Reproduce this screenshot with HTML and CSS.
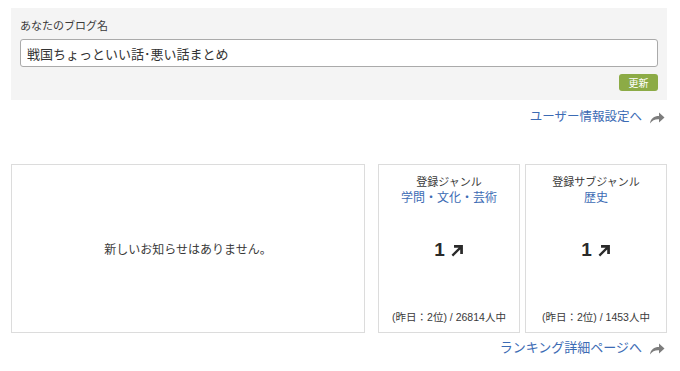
FILE: index.html
```html
<!DOCTYPE html>
<html lang="ja">
<head>
  <meta charset="UTF-8" />
  <title>ブログ設定</title>
  <link rel="stylesheet" href="styles.css">
</head>
<body>

  <div class="blog-name">
    <label for="blog_name">あなたのブログ名</label>
    <input type="text" id="blog_name" name="blog_name" value="戦国ちょっといい話･悪い話まとめ">
    <div class="actions">
      <button type="submit">更新</button>
    </div>
  </div>

  <div class="more-link">
    <a href="#">ユーザー情報設定へ</a>
    <svg class="go" viewBox="0 0 16 13"><path d="M1 12.5C1.6 7.5 5 5 10 5V1.5L15.5 6.5 10 11.5V8.2C6 8 3 9.3 1 12.5Z"/></svg>
  </div>

  <div class="cards">
    <div class="card news">新しいお知らせはありません。</div>

    <div class="card rank">
      <div class="rank-title">登録ジャンル</div>
      <a href="#" class="rank-genre">学問・文化・芸術</a>
      <div class="rank-num">1 <svg class="up" viewBox="0 0 12 12"><path d="M2 11.5L0.5 10 7 3.5H2.8V1H11V9.2H8.5V5Z"/></svg></div>
      <div class="rank-sub">(昨日：2位) / 26814人中</div>
    </div>

    <div class="card rank">
      <div class="rank-title">登録サブジャンル</div>
      <a href="#" class="rank-genre">歴史</a>
      <div class="rank-num">1 <svg class="up" viewBox="0 0 12 12"><path d="M2 11.5L0.5 10 7 3.5H2.8V1H11V9.2H8.5V5Z"/></svg></div>
      <div class="rank-sub">(昨日：2位) / 1453人中</div>
    </div>
  </div>

  <div class="more-link bottom">
    <a href="#">ランキング詳細ページへ</a>
    <svg class="go" viewBox="0 0 16 13"><path d="M1 12.5C1.6 7.5 5 5 10 5V1.5L15.5 6.5 10 11.5V8.2C6 8 3 9.3 1 12.5Z"/></svg>
  </div>

</body>
</html>
```

FILE: styles.css
```css
body {
  font-family: "Liberation Sans", Arial, "Noto Sans CJK JP", sans-serif;
  margin: 0;
  padding: 8px 13px 0 11px;
  background: white;
  color: #3a3a3a;
}

a {
  color: #3c6bb4;
  text-decoration: none;
}

.blog-name {
  background: #f4f4f4;
  padding: 11px 9px 9px 9px;
}

.blog-name label {
  display: block;
  font-size: 11px;
  line-height: 14px;
  margin-bottom: 6px;
}

.blog-name input[type="text"] {
  display: block;
  box-sizing: border-box;
  width: 100%;
  height: 28px;
  padding: 0 6px;
  border: 1px solid #aaa;
  border-radius: 3px;
  font-family: inherit;
  font-size: 13px;
  color: #333;
  background: white;
}

.actions {
  display: flex;
  justify-content: flex-end;
  margin-top: 7px;
}

button {
  width: 39px;
  height: 17px;
  padding: 0;
  background: #8cab46;
  color: white;
  font-family: inherit;
  font-size: 10px;
  border: none;
  border-radius: 3px;
  cursor: pointer;
}

.more-link {
  display: flex;
  justify-content: flex-end;
  align-items: center;
  gap: 7px;
  margin-top: 8px;
  padding-right: 2px;
  font-size: 12.5px;
  line-height: 18px;
}

.go {
  width: 16px;
  height: 13px;
  fill: #7d7d7d;
}

.cards {
  display: flex;
  margin-top: 38px;
  height: 169px;
}

.card {
  box-sizing: border-box;
  border: 1px solid #dcdcdc;
  background: white;
}

.news {
  width: 354px;
  margin-right: 13px;
  display: flex;
  align-items: center;
  justify-content: center;
  font-size: 12px;
}

.rank {
  width: 142px;
  margin-right: 5px;
  display: flex;
  flex-direction: column;
  align-items: center;
  padding-top: 10px;
}

.rank:last-child {
  margin-right: 0;
}

.rank-title {
  font-size: 11px;
  line-height: 15px;
}

.rank-genre {
  font-size: 12px;
  line-height: 16px;
}

.rank-num {
  margin-top: 33px;
  font-size: 19px;
  font-weight: bold;
  color: #2a2a2a;
  line-height: 22px;
  display: flex;
  align-items: center;
  gap: 6px;
}

.up {
  width: 13px;
  height: 13px;
  fill: #2a2a2a;
}

.rank-sub {
  margin-top: auto;
  margin-bottom: 8px;
  font-size: 10.5px;
  line-height: 14px;
}

.bottom {
  margin-top: 6px;
  font-size: 13px;
}
```
